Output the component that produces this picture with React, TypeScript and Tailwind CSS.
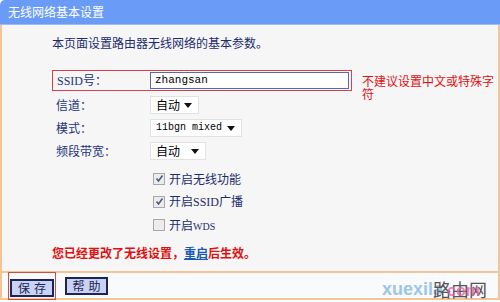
import React from 'react';

const cjk = '"Noto Sans CJK SC", sans-serif';
const mono = '"Liberation Mono", "Noto Sans CJK SC", monospace';

function Select({ value, width, isMono }: { value: string; width: string; isMono?: boolean }) {
  return (
    <div className={`flex items-center justify-between bg-white border border-[#e2e2e2] h-[18px] pl-[5px] pr-[6px] ${width}`}>
      <span
        className={`whitespace-nowrap leading-none text-black ${isMono ? 'text-[10px]' : 'text-[12px]'}`}
        style={{ fontFamily: isMono ? mono : cjk }}
      >
        {value}
      </span>
      <svg width="8" height="5" viewBox="0 0 8 5">
        <path d="M0 0 H8 L4 5 Z" fill="#111" />
      </svg>
    </div>
  );
}

function Check({ checked, label }: { checked: boolean; label: React.ReactNode }) {
  return (
    <div className="flex items-center h-[23px] pl-[101px]">
      <span className="w-[12px] h-[12px] border border-[#a8a8a8] bg-[#ececec] flex items-center justify-center">
        {checked && (
          <svg width="9" height="9" viewBox="0 0 9 9">
            <path d="M1.5 4.5 L3.5 7 L7.5 1.5" stroke="#4a5a80" strokeWidth="1.6" fill="none" />
          </svg>
        )}
      </span>
      <span className="ml-[4px] text-[12px] text-[#1c2c6e]">{label}</span>
    </div>
  );
}

function Row({ label, children, mt }: { label: string; children: React.ReactNode; mt: string }) {
  return (
    <div className={`flex items-center ${mt}`}>
      <div className="w-[98px] pl-[4px] text-[12px] text-[#22347a]">{label}</div>
      {children}
    </div>
  );
}

export default function App() {
  return (
    <div className="relative w-[500px] h-[302px] bg-white overflow-hidden" style={{ fontFamily: cjk }}>
      <div className="h-[25px] bg-[#6a9cf7] rounded-tl-[5px] border-b border-[#9cbdf5] flex items-center pl-[8px] text-white text-[12px]">
        无线网络基本设置
      </div>

      <div className="h-[248px] bg-[#f6f6f6] border-x-2 border-b-2 border-[#f3c594] pl-[50px] pt-[10px]">
        <div className="text-[12px] text-[#1c2c6e] leading-[16px]">本页面设置路由器无线网络的基本参数。</div>

        <div className="flex items-start h-[21px] mt-[19px]">
          <div className="flex items-center w-[300px] h-[21px] border border-[#d84050] bg-[#f6f6f6]">
            <div className="w-[97px] pl-[4px] text-[12px] text-[#22347a]" style={{ fontFamily: '"Liberation Serif", "Noto Sans CJK SC", serif' }}>
              SSID号：
            </div>
            <div className="w-[199px] h-[17px] bg-white border border-[#5a6aa8] flex items-center pl-[4px] text-[11px] text-black" style={{ fontFamily: mono }}>
              zhangsan
            </div>
          </div>
          <div className="ml-[10px] w-[136px] text-[12px] leading-[13px] text-[#e01010] pt-[4px]">
            不建议设置中文或特殊字符
          </div>
        </div>

        <Row label="信道：" mt="mt-[5px]">
          <Select value="自动" width="w-[49px]" />
        </Row>
        <Row label="模式：" mt="mt-[5px]">
          <Select value="11bgn mixed" width="w-[92px]" isMono />
        </Row>
        <Row label="频段带宽：" mt="mt-[5px]">
          <Select value="自动" width="w-[56px]" />
        </Row>

        <div className="mt-[7px]">
          <Check checked label="开启无线功能" />
          <Check checked label={<span>开启<span style={{ fontFamily: '"Liberation Serif", serif' }}>SSID</span>广播</span>} />
          <Check checked={false} label={<span>开启<span className="text-[10px]" style={{ fontFamily: '"Liberation Serif", serif' }}>WDS</span></span>} />
        </div>

        <div className="mt-[8px] text-[12px] text-[#e01010] font-bold">
          您已经更改了无线设置，<span className="text-[#1a5ab0] underline">重启</span>后生效。
        </div>
      </div>

      <div className="h-[27px] bg-[#f9fafb] border-x-2 border-b-2 border-[#f3c594] flex items-center pl-[6px] gap-[9px]">
        <div className="border border-[#d84a3a] p-[1px]">
          <button className="w-[44px] h-[18px] bg-[#c9d2f2] border-2 border-[#1c2558] text-[12px] leading-none text-[#1c2558] tracking-[4px] pl-[4px]">
            保存
          </button>
        </div>
        <button className="w-[43px] h-[18px] bg-[#c9d2f2] border-2 border-[#1c2558] text-[12px] leading-none text-[#1c2558] tracking-[4px] pl-[4px]">
          帮助
        </button>
      </div>

      <div className="absolute left-[382px] top-[280px] flex items-end leading-none">
        <span className="text-[18px] font-bold text-[#9cc6ea]" style={{ fontFamily: '"Liberation Sans", sans-serif' }}>xuexila</span>
        <span className="relative -ml-[10px] text-[18px] text-[#555]">
          路由网
          <span className="absolute left-[14px] top-[3px] text-[16px] font-bold text-[#e060a8]/75" style={{ fontFamily: '"Liberation Sans", sans-serif' }}>com</span>
        </span>
      </div>
    </div>
  );
}
